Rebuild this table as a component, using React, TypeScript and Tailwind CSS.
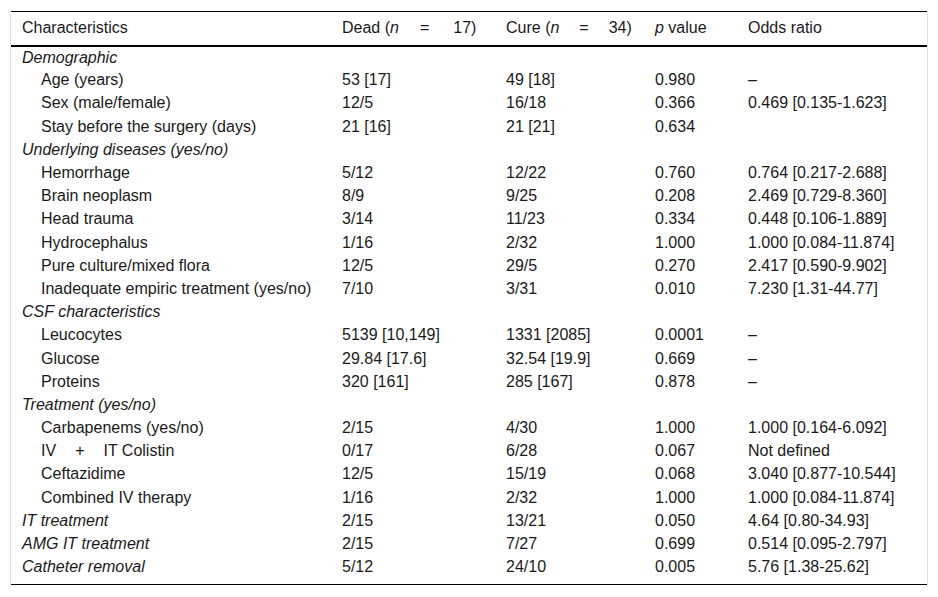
const rows: { label: string; kind: "group" | "sub" | "top"; dead?: string; cure?: string; p?: string; odds?: string }[] = [
  { label: "Demographic", kind: "group" },
  { label: "Age (years)", kind: "sub", dead: "53 [17]", cure: "49 [18]", p: "0.980", odds: "–" },
  { label: "Sex (male/female)", kind: "sub", dead: "12/5", cure: "16/18", p: "0.366", odds: "0.469 [0.135-1.623]" },
  { label: "Stay before the surgery (days)", kind: "sub", dead: "21 [16]", cure: "21 [21]", p: "0.634", odds: "" },
  { label: "Underlying diseases (yes/no)", kind: "group" },
  { label: "Hemorrhage", kind: "sub", dead: "5/12", cure: "12/22", p: "0.760", odds: "0.764 [0.217-2.688]" },
  { label: "Brain neoplasm", kind: "sub", dead: "8/9", cure: "9/25", p: "0.208", odds: "2.469 [0.729-8.360]" },
  { label: "Head trauma", kind: "sub", dead: "3/14", cure: "11/23", p: "0.334", odds: "0.448 [0.106-1.889]" },
  { label: "Hydrocephalus", kind: "sub", dead: "1/16", cure: "2/32", p: "1.000", odds: "1.000 [0.084-11.874]" },
  { label: "Pure culture/mixed flora", kind: "sub", dead: "12/5", cure: "29/5", p: "0.270", odds: "2.417 [0.590-9.902]" },
  { label: "Inadequate empiric treatment (yes/no)", kind: "sub", dead: "7/10", cure: "3/31", p: "0.010", odds: "7.230 [1.31-44.77]" },
  { label: "CSF characteristics", kind: "group" },
  { label: "Leucocytes", kind: "sub", dead: "5139 [10,149]", cure: "1331 [2085]", p: "0.0001", odds: "–" },
  { label: "Glucose", kind: "sub", dead: "29.84 [17.6]", cure: "32.54 [19.9]", p: "0.669", odds: "–" },
  { label: "Proteins", kind: "sub", dead: "320 [161]", cure: "285 [167]", p: "0.878", odds: "–" },
  { label: "Treatment (yes/no)", kind: "group" },
  { label: "Carbapenems (yes/no)", kind: "sub", dead: "2/15", cure: "4/30", p: "1.000", odds: "1.000 [0.164-6.092]" },
  { label: "IV+IT Colistin", kind: "sub", dead: "0/17", cure: "6/28", p: "0.067", odds: "Not defined" },
  { label: "Ceftazidime", kind: "sub", dead: "12/5", cure: "15/19", p: "0.068", odds: "3.040 [0.877-10.544]" },
  { label: "Combined IV therapy", kind: "sub", dead: "1/16", cure: "2/32", p: "1.000", odds: "1.000 [0.084-11.874]" },
  { label: "IT treatment", kind: "top", dead: "2/15", cure: "13/21", p: "0.050", odds: "4.64 [0.80-34.93]" },
  { label: "AMG IT treatment", kind: "top", dead: "2/15", cure: "7/27", p: "0.699", odds: "0.514 [0.095-2.797]" },
  { label: "Catheter removal", kind: "top", dead: "5/12", cure: "24/10", p: "0.005", odds: "5.76 [1.38-25.62]" },
];

const Label = ({ text }: { text: string }) => {
  if (text === "IV+IT Colistin") {
    return (
      <>
        IV<span className="mx-[19px]">+</span>IT Colistin
      </>
    );
  }
  return <>{text}</>;
};

export default function App() {
  return (
    <div className="bg-white w-[938px] h-[597px] pt-[11px] px-[10px] font-['Liberation_Sans',Arial,sans-serif] text-[16px] text-[#1a1a1a]">
      <div className="border-x border-[#e2e2e2] h-[574px]">
        <table className="w-full border-collapse table-fixed">
          <colgroup>
            <col className="w-[320px]" />
            <col className="w-[164px]" />
            <col className="w-[149px]" />
            <col className="w-[93px]" />
            <col />
          </colgroup>
          <thead>
            <tr className="border-t border-b-2 border-black h-[34px] text-left">
              <th className="font-normal pl-[11px]">Characteristics</th>
              <th className="font-normal pl-[11px] whitespace-nowrap">
                Dead (<i>n</i>
                <span className="ml-[21px] mr-[24px]">=</span>17)
              </th>
              <th className="font-normal pl-[11px] whitespace-nowrap">
                Cure (<i>n</i>
                <span className="mx-[20px]">=</span>34)
              </th>
              <th className="font-normal pl-[11px] whitespace-nowrap">
                <i>p</i> value
              </th>
              <th className="font-normal pl-[11px]">Odds ratio</th>
            </tr>
          </thead>
          <tbody className="border-b border-black">
            {rows.map((r, i) => {
              const last = i === rows.length - 1;
              const cell = last ? "pl-[11px] pb-[5px] align-top" : "pl-[11px]";
              return (
                <tr key={i} className={`leading-[20px] ${last ? "h-[28.4px]" : "h-[23.2px]"}`}>
                  <td className={`whitespace-nowrap ${last ? "pb-[5px] align-top pt-[1px]" : ""} ${r.kind === "sub" ? "pl-[30px]" : "pl-[11px] italic"}`}>
                    <Label text={r.label} />
                  </td>
                  <td className={`${cell} ${last ? "pt-[1px]" : ""}`}>{r.dead}</td>
                  <td className={`${cell} ${last ? "pt-[1px]" : ""}`}>{r.cure}</td>
                  <td className={`${cell} ${last ? "pt-[1px]" : ""}`}>{r.p}</td>
                  <td className={`${cell} whitespace-nowrap ${last ? "pt-[1px]" : ""}`}>{r.odds}</td>
                </tr>
              );
            })}
          </tbody>
        </table>
      </div>
    </div>
  );
}
